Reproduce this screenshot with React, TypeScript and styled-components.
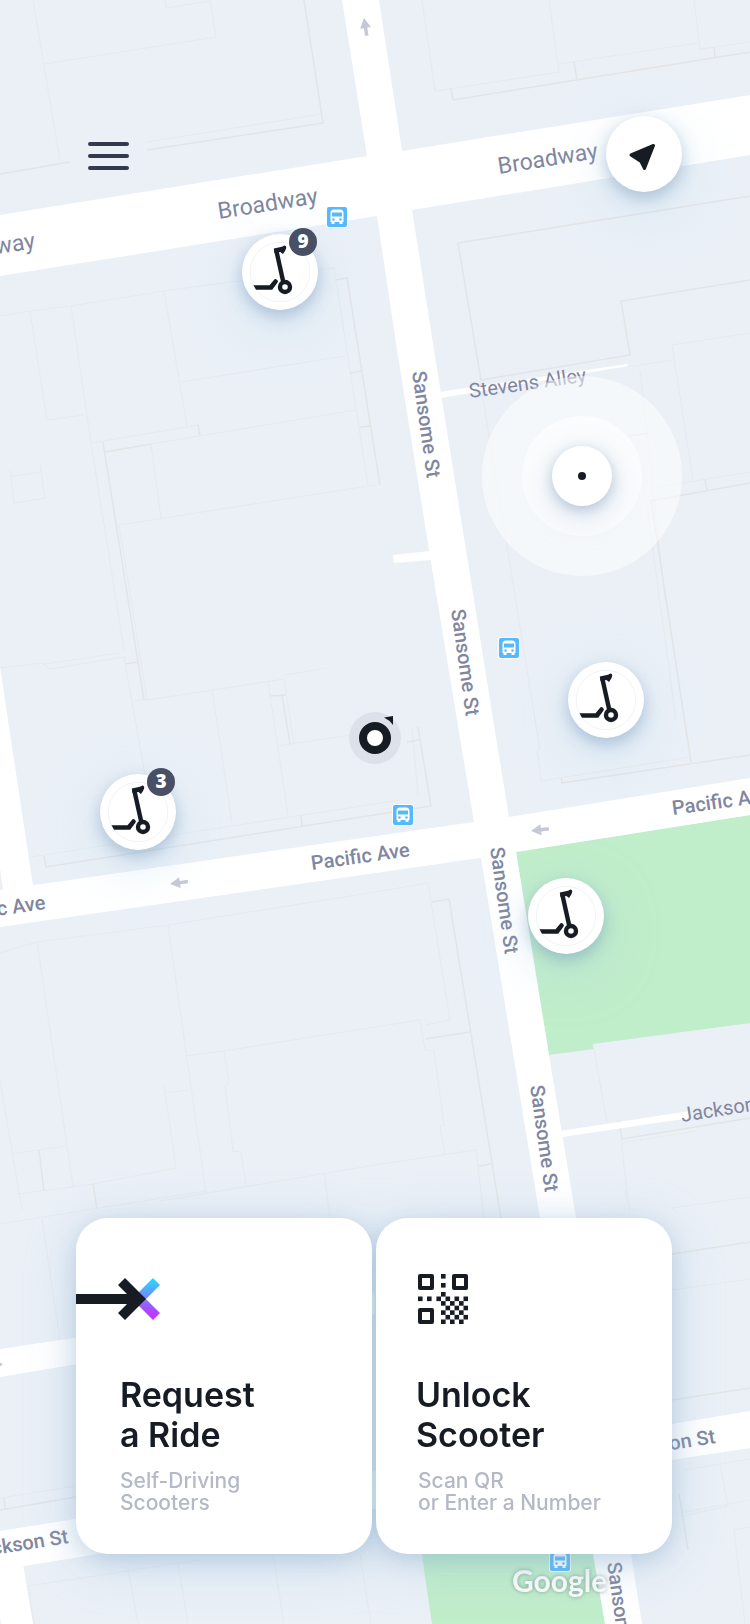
import React from "react";
import styled, { createGlobalStyle } from "styled-components";

const ink = "#171c24";

const GlobalStyle = createGlobalStyle`
  *, *::before, *::after { box-sizing: border-box; }
  body {
    margin: 0;
    background: #ebf0f7;
    font-family: Inter, "Liberation Sans", sans-serif;
    color: ${ink};
  }
  button { font: inherit; color: inherit; border: 0; padding: 0; cursor: pointer; }
`;

const Screen = styled.main`
  position: relative;
  display: flex;
  flex-direction: column;
  justify-content: space-between;
  min-height: 100vh;
  overflow: hidden;
`;

/* ---------- Map ---------- */

const MapLayer = styled.div`
  position: absolute;
  inset: 0;
`;

const MapCanvas = styled.svg`
  display: block;
  width: 100%;
  height: 100%;
`;

const StreetName = styled.text<{ $size?: number; $medium?: boolean }>`
  font-family: Roboto, "Liberation Sans", sans-serif;
  font-size: ${(p) => p.$size ?? 20}px;
  font-weight: ${(p) => (p.$medium ? 500 : 400)};
  text-rendering: geometricPrecision;
  fill: #80869f;
`;

const Attribution = styled.text`
  font-family: Lato, "Liberation Sans", sans-serif;
  font-size: 30px;
  font-weight: 700;
  fill: #fafcfb;
  filter: drop-shadow(0 0 2px rgba(70, 90, 90, 0.55));
`;

const parcels = [
  "M304 0L323 123L147 150M70 162L0 174",
  "M451 89L453 100L750 52M574 62L577 79M714 47L715 57",
  "M750 196L458 243L481 380L630 355L621 301L750 280",
  "M336 280L347 278L380 485M350 373L361 371M360 427L371 426",
  "M103 442L144 700M105 452L151 444M198 424L200 435M126 664L137 662",
  "M270 696L286 695M282 695L290 744",
  "M44 856L46 867L431 806L418 727M301 815L302 826M407 742L419 740",
  "M561 778L562 783L750 755M650 501L750 483M651 501L691 762M705 480L707 490M629 436L649 433",
  "M432 902L449 899L501 1218M425 1039L470 1032M479 1166L491 1164",
  "M619 1121L622 1139L750 1118M39 1150L44 1191M93 1184L97 1208",
  "M0 1510L76 1497M4 1498L5 1509M672 1400L750 1388M672 1254L750 1242M679 1494L688 1550",
];

const buildings = [
  "M33 0L60 161M44 64L216 37L210 0M165 0L166 8L210 1M322 114L147 142",
  "M0 316L30 311L71 306L164 291L334 268L368 485M30 311L47 420L84 415M71 306L91 443M164 291L187 426M181 382L345 356",
  "M91 443L199 425M151 444L356 410M151 444L161 518M119 525L375 485M119 525L147 700L284 679M91 443L124 650",
  "M0 668L42 663L50 669L124 657L145 775M45 664L119 653M133 701L147 699M212 690L232 823M268 682L288 815M278 746L350 735M284 679L294 744M284 675L327 668",
  "M10 470L14 503L45 498L40 465M10 477L39 472M31 857L400 800",
  "M422 0L435 91L559 72L549 0M559 64L698 43M694 0L700 49L750 42",
  "M750 333L672 345L693 480M480 380L540 750M627 367L672 360M640 370L665 600M646 500L676 720M652 488L750 472",
  "M537 750L541 781L690 757M412 727L418 795",
  "M375 892L428 883L450 1020L425 1025M375 1027L420 1020L425 1050L434 1051L444 1125L440 1126L445 1155M375 1165L476 1150L484 1218",
  "M593 1044L607 1122M621 1139L628 1200M621 1143L697 1131",
  "M0 953L37 942L168 925L375 892M37 942L73 1186M168 925L206 1193M0 1080L22 1210M12 1154L66 1146M18 1194L93 1184L176 1168L164 1085M165 1093L188 1090",
  "M185 1056L224 1051L229 1083L225 1086L233 1151L241 1152L246 1187M224 1051L375 1027M160 1201L375 1165M324 1173L330 1218",
  "M0 1224L205 1191M42 1219L60 1340M0 1498L76 1486M34 1624L28 1586L200 1560M128 1568L138 1624M178 1563L188 1624M273 1554L284 1624M360 1554L371 1624",
  "M625 1190L630 1210M672 1208L750 1197M672 1290L750 1279M684 1470L750 1459M720 1465L728 1506L684 1516M685 1512L750 1500M750 1527L734 1530L745 1624",
];

const streets = [
  "M0 215L367 156L402 151L750 95V155L412 210L377 216L0 276Z",
  "M342 0H379L402 151L412 210L434 350L498 750L509 817L516 852L549 1055L576 1218L631 1554L642 1624H605L593 1554L540 1218L481 858L474 822L462 750L429 550L397 350L377 216L367 156Z",
  "M0 890L474 822L509 817L750 778V815L516 852L480 858L0 927Z",
  "M0 667L33 886L3 890L0 868Z",
  "M439 392L627 364L628 366L441 398Z",
  "M393 555L430 551L431 560L394 563Z",
  "M560 1131L690 1111V1118L562 1137Z",
  "M0 1349L375 1293V1314L0 1377Z",
  "M0 1531L672 1424L750 1411V1448L672 1460L0 1570Z",
  "M0 1568L23 1564L33 1624H1L0 1616Z",
];

type Label = { text: string; x: number; y: number; angle: number; size?: number; medium?: boolean; end?: boolean };

const labels: Label[] = [
  { text: "Broadway", x: 219, y: 219, angle: -9, size: 23 },
  { text: "Broadway", x: 499, y: 174, angle: -9, size: 23 },
  { text: "Broadway", x: 36, y: 248, angle: -9, size: 23, end: true },
  { text: "Stevens Alley", x: 470, y: 398, angle: -8 },
  { text: "Sansome St", x: 412, y: 372, angle: 82, medium: true },
  { text: "Sansome St", x: 451, y: 610, angle: 82, medium: true },
  { text: "Sansome St", x: 490, y: 848, angle: 82, medium: true },
  { text: "Sansome St", x: 530, y: 1086, angle: 82, medium: true },
  { text: "Sansome St", x: 607, y: 1563, angle: 82, medium: true },
  { text: "Pacific Ave", x: 312, y: 870, angle: -8, medium: true },
  { text: "Pacific Ave", x: 673, y: 815, angle: -8, medium: true },
  { text: "Pacific Ave", x: 46, y: 909, angle: -8, medium: true, end: true },
  { text: "Jackson St", x: 682, y: 1122, angle: -9 },
  { text: "Jackson St", x: 69, y: 1543, angle: -9, medium: true, end: true },
  { text: "Jackson St", x: 716, y: 1443, angle: -9, medium: true, end: true },
];

const busStops = [
  [327, 207],
  [499, 638],
  [393, 805],
  [550, 1551],
];

const BusStop = ({ x, y }: { x: number; y: number }) => (
  <g transform={`translate(${x} ${y})`}>
    <rect x="-1" y="-1" width="22" height="22" rx="3" fill="#fff" opacity="0.8" />
    <rect width="20" height="20" rx="2" fill="#56b9fb" />
    <path d="M3.500 6Q3.500 2.500 7 2.500H13Q16.500 2.500 16.500 6V15H15.500V17H12.500V15H7.500V17H4.500V15H3.500Z" fill="#fff" />
    <rect x="5" y="5.500" width="10" height="4" fill="#56b9fb" />
    <circle cx="6.500" cy="12.500" r="1.200" fill="#56b9fb" />
    <circle cx="13.500" cy="12.500" r="1.200" fill="#56b9fb" />
  </g>
);

const OneWayArrow = ({ x, y, angle }: { x: number; y: number; angle: number }) => (
  <path
    transform={`translate(${x} ${y}) rotate(${angle})`}
    d="M0 0L10 -5.500V-1.700H18V1.700H10V5.500Z"
    fill="#c6c8d7"
  />
);

const CityMap = () => (
  <MapCanvas viewBox="0 0 750 1624" preserveAspectRatio="xMinYMin slice" role="img" aria-label="Street map">
    <path d="M516 852L750 815V1023L593 1044L594 1049L549 1055Z" fill="#c0edca" />
    <path d="M411 1480H583L605 1624H432Z" fill="#c0edca" />
    <g fill="none" stroke="#e6eaef" strokeWidth="1.200">
      {buildings.map((d) => (
        <path key={d} d={d} />
      ))}
    </g>
    <g fill="none" stroke="#e3e4e6" strokeWidth="1.500">
      {parcels.map((d) => (
        <path key={d} d={d} />
      ))}
    </g>
    <g fill="#fff">
      {streets.map((d) => (
        <path key={d} d={d} />
      ))}
    </g>
    <OneWayArrow x={364} y={18} angle={81} />
    <OneWayArrow x={170} y={884} angle={-8} />
    <OneWayArrow x={531} y={831} angle={-7} />
    <path d="M-2 1362L3 1364L-2 1368Z" fill="#c6c8d7" />
    {labels.map((l) => (
      <StreetName
        key={`${l.x}-${l.y}`}
        $size={l.size}
        $medium={l.medium}
        textAnchor={l.end ? "end" : "start"}
        transform={`translate(${l.x} ${l.y}) rotate(${l.angle})`}
      >
        {l.text}
      </StreetName>
    ))}
    {busStops.map(([x, y]) => (
      <BusStop key={y} x={x} y={y} />
    ))}
    <Attribution x="512" y="1592">
      Google
    </Attribution>
  </MapCanvas>
);

/* ---------- Things that stand on the map ---------- */

const Marker = styled.div<{ $x: number; $y: number }>`
  position: absolute;
  left: ${(p) => p.$x}px;
  top: ${(p) => p.$y}px;
  transform: translate(-50%, -50%);
`;

const RoundButton = styled.button`
  display: block;
  width: 76px;
  height: 76px;
  border-radius: 50%;
  background: #fff;
  box-shadow: 0 6px 16px rgba(95, 130, 175, 0.4), 0 16px 56px rgba(170, 215, 235, 0.4);

  svg { display: block; }
`;

const Badge = styled.span`
  position: absolute;
  top: -6px;
  right: 1px;
  width: 28px;
  height: 28px;
  border-radius: 50%;
  background: #494f64;
  color: #fff;
  font-family: "Open Sans", "Liberation Sans", sans-serif;
  font-size: 19px;
  font-weight: 800;
  line-height: 27px;
  text-align: center;
`;

const PulseOuter = styled.div`
  display: grid;
  place-items: center;
  width: 200px;
  height: 200px;
  border-radius: 50%;
  background: rgba(255, 255, 255, 0.52);
`;

const PulseInner = styled.div`
  display: grid;
  place-items: center;
  width: 120px;
  height: 120px;
  border-radius: 50%;
  background: rgba(255, 255, 255, 0.5);
`;

const PulseCore = styled.div`
  display: grid;
  place-items: center;
  width: 60px;
  height: 60px;
  border-radius: 50%;
  background: #fff;
  box-shadow: 0 4px 14px rgba(95, 130, 175, 0.4), 0 12px 36px rgba(150, 170, 200, 0.24);

  &::after {
    content: "";
    width: 8px;
    height: 8px;
    border-radius: 50%;
    background: ${ink};
  }
`;

const ScooterGlyph = () => (
  <svg width="76" height="76" viewBox="0 0 76 76" fill="none" aria-hidden="true">
    <circle cx="38" cy="38" r="29.700" stroke="#e9edf1" strokeWidth="0.700" />
    <path d="M34.200 16L41.300 48" stroke={ink} strokeWidth="4.400" />
    <path d="M31.800 14.500L40 12.800L42.300 11.600Q44.300 11.600 44.300 13.800L43.300 16.500L41 20L38.400 18L32.500 19Z" fill={ink} />
    <path d="M11.500 51.200H27.500L31.700 46.200A2.200 2.200 0 0 1 35.400 48.800L30.200 55.800H14Z" fill={ink} />
    <circle cx="43" cy="53" r="5" stroke={ink} strokeWidth="4.400" fill="#fff" />
  </svg>
);

const scooters = [
  { x: 280, y: 272, count: 9 },
  { x: 138, y: 812, count: 3 },
  { x: 606, y: 700 },
  { x: 566, y: 916 },
];

/* ---------- Top bar ---------- */

const TopBar = styled.header`
  position: relative;
  display: flex;
  align-items: flex-start;
  justify-content: space-between;
  padding: 116px 68px 0 88px;
`;

const MenuButton = styled.button`
  display: flex;
  flex-direction: column;
  justify-content: center;
  gap: 8px;
  width: 41px;
  height: 80px;
  background: none;
`;

const MenuLine = styled.span`
  height: 4px;
  border-radius: 2px;
  background: #343a4e;
`;

/* ---------- Action cards ---------- */

/* The shadow belongs to the pair, so neither card shades the other. */
const Actions = styled.nav`
  position: relative;
  display: grid;
  grid-template-columns: 1fr 1fr;
  gap: 4px;
  padding: 0 78px 70px 76px;
  filter: drop-shadow(0 6px 12px rgba(95, 130, 175, 0.26)) drop-shadow(0 8px 26px rgba(160, 200, 225, 0.4));
`;

const ActionCard = styled.button`
  display: flex;
  flex-direction: column;
  align-items: stretch;
  padding: 56px 0 40px;
  border-radius: 32px;
  background: #fff;
  text-align: left;
`;

const CardIcon = styled.span<{ $inset: number }>`
  display: block;
  height: 50px;
  margin-bottom: 51px;
  padding-left: ${(p) => p.$inset}px;

  svg { display: block; }
`;

const CardTitle = styled.span<{ $inset: number }>`
  display: block;
  margin-bottom: 15px;
  padding-left: ${(p) => p.$inset}px;
  font-size: 34px;
  font-weight: 600;
  line-height: 40px;
`;

const CardNote = styled.span<{ $inset: number }>`
  display: block;
  padding-left: ${(p) => p.$inset}px;
  font-size: 21px;
  font-weight: 500;
  line-height: 22px;
  color: #b4b8c7;
`;

const RideGlyph = () => (
  <svg width="86" height="50" viewBox="0 0 86 50" aria-hidden="true">
    <defs>
      <linearGradient id="ride" x1="0" y1="4" x2="0" y2="46" gradientUnits="userSpaceOnUse">
        <stop offset="0" stopColor="#20e0ff" />
        <stop offset="0.45" stopColor="#7588ff" />
        <stop offset="0.75" stopColor="#a84cff" />
        <stop offset="1" stopColor="#d12cfb" />
      </linearGradient>
    </defs>
    <path d="M77 4L84 11L70 25L84 39L77 46L56 25Z" fill="url(#ride)" />
    <path d="M0 20H51L42 11L49 4L70 25L49 46L42 39L51 30H0Z" fill={ink} />
  </svg>
);

const qrPoints: [number, number][] = [
  [23, 0], [23, 9], [23, 18],
  [0, 22.5], [9, 22.5], [18.4, 22.5],
  ...[0, 1, 2, 3, 4, 5].flatMap((row) =>
    (row % 2 === 0 ? [27.5, 36.5, 45.5] : [23, 32, 41]).map(
      (x): [number, number] => [x, 22.5 + row * 4.6],
    ),
  ),
];

const QrGlyph = () => (
  <svg width="50" height="50" viewBox="0 0 50 50" fill={ink} aria-hidden="true">
    <g fill="none" stroke={ink} strokeWidth="4" strokeLinejoin="round">
      <rect x="2" y="2" width="12" height="12" />
      <rect x="36" y="2" width="12" height="12" />
      <rect x="2" y="36" width="12" height="12" />
    </g>
    {qrPoints.map(([x, y]) => (
      <rect key={`${x}-${y}`} x={x} y={y} width="4.600" height="4.600" />
    ))}
  </svg>
);

export default function App() {
  return (
    <Screen>
      <GlobalStyle />
      <MapLayer>
        <CityMap />
        <Marker $x={582} $y={476}>
          <PulseOuter>
            <PulseInner>
              <PulseCore />
            </PulseInner>
          </PulseOuter>
        </Marker>
        <Marker $x={375} $y={738}>
          <svg width="52" height="52" viewBox="0 0 52 52" display="block" aria-label="Your position">
            <circle cx="26" cy="26" r="26" fill="#dde2ea" />
            <circle cx="26" cy="26" r="12" fill="#fff" stroke={ink} strokeWidth="8" />
            <path d="M35 5.500L44 4V13Q40.500 8 35 5.500Z" fill={ink} />
          </svg>
        </Marker>
      </MapLayer>
      <TopBar>
        <MenuButton type="button" aria-label="Menu">
          <MenuLine />
          <MenuLine />
          <MenuLine />
        </MenuButton>
        <RoundButton type="button" aria-label="Show my location">
          <svg width="76" height="76" viewBox="0 0 76 76" aria-hidden="true">
            <path
              d="M25 39L47.500 29.500L38.500 52.500L35 45.500Z"
              fill={ink}
              stroke={ink}
              strokeWidth="3"
              strokeLinejoin="round"
            />
          </svg>
        </RoundButton>
      </TopBar>
      {scooters.map((s) => (
        <Marker key={s.y} $x={s.x} $y={s.y}>
          <RoundButton type="button" aria-label="Scooter">
            <ScooterGlyph />
          </RoundButton>
          {s.count && <Badge>{s.count}</Badge>}
        </Marker>
      ))}
      <Actions aria-label="Actions">
        <ActionCard type="button">
          <CardIcon $inset={0}>
            <RideGlyph />
          </CardIcon>
          <CardTitle $inset={44}>
            Request
            <br />a Ride
          </CardTitle>
          <CardNote $inset={44}>
            Self-Driving
            <br />
            Scooters
          </CardNote>
        </ActionCard>
        <ActionCard type="button">
          <CardIcon $inset={42}>
            <QrGlyph />
          </CardIcon>
          <CardTitle $inset={40}>
            Unlock
            <br />
            Scooter
          </CardTitle>
          <CardNote $inset={42}>
            Scan QR
            <br />
            or Enter a Number
          </CardNote>
        </ActionCard>
      </Actions>
    </Screen>
  );
}
